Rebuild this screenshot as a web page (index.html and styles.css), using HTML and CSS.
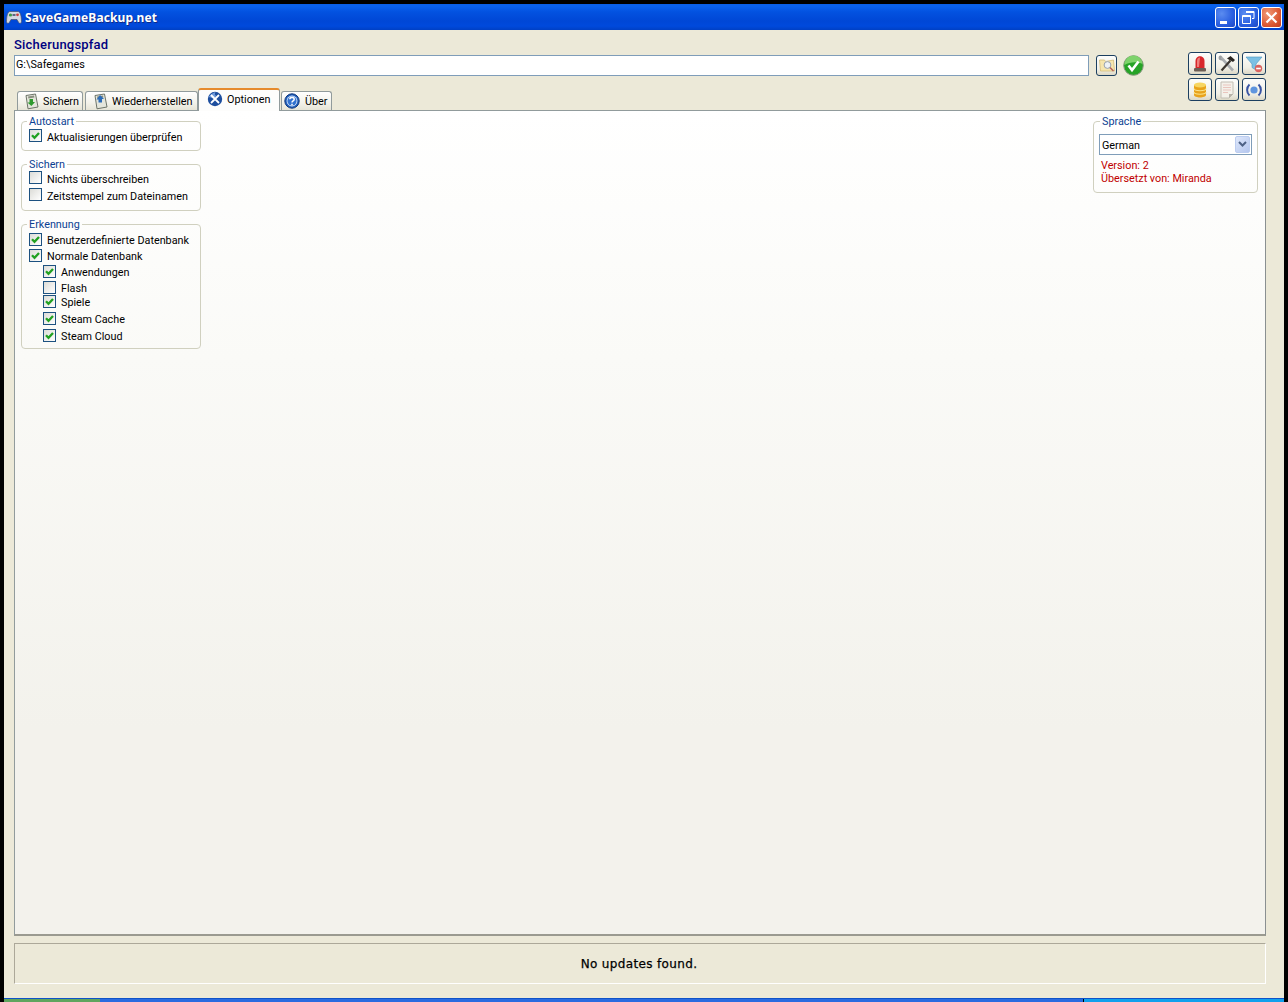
FILE: index.html
```html
<!DOCTYPE html>
<html lang="de">
<head>
<meta charset="utf-8">
<title>SaveGameBackup.net</title>
<link rel="stylesheet" href="styles.css">
</head>
<body>
<svg class="defs" width="0" height="0" aria-hidden="true">
  <defs>
    <symbol id="tick" viewBox="0 0 13 13">
      <path d="M3 6.300 5.500 8.900 10 4" fill="none" stroke="#21a121" stroke-width="2.300"/>
    </symbol>
    <symbol id="clip" viewBox="0 0 18 18">
      <path d="M4 3.500 13.500 2 16 15 6 16.800Z" fill="#e4e6dc" stroke="#6d7468" stroke-width="1"/>
      <path d="M6 4.500 12 3.500 12.400 5.600 6.400 6.600Z" fill="#8a8f80"/>
    </symbol>
  </defs>
</svg>
<div class="window">
  <header class="titlebar">
    <svg class="app-icon" width="16" height="16" viewBox="0 0 16 16">
      <path d="M4 2.500h8C14.500 2.500 15.500 8 15.500 12.500c0 2-2 2.500-3 .8L11 10.500H5L3.500 13.300C2.500 15 .5 14.500 .5 12.500 .5 8 1.500 2.500 4 2.500Z" fill="#d4d9e2" stroke="#46506a" stroke-width=".7"/>
      <circle cx="4.500" cy="6" r="1.600" fill="#3a9a44"/>
      <circle cx="11.500" cy="5.800" r="1.400" fill="#c84040"/>
      <rect x="6.500" y="5" width="3" height="2" fill="#5b6680"/>
    </svg>
    <span class="app-title">SaveGameBackup.net</span>
    <div class="win-controls">
      <button class="win-btn" type="button" aria-label="Minimieren">
        <svg width="21" height="21" viewBox="0 0 21 21"><rect x="5" y="14" width="7" height="3" fill="#fff"/></svg>
      </button>
      <button class="win-btn" type="button" aria-label="Wiederherstellen">
        <svg width="21" height="21" viewBox="0 0 21 21"><path d="M8 4.500h8v7h-2M4.500 8.500h8v8h-8Z M4.500 9.500h8 M8 5.500h8" fill="none" stroke="#fff" stroke-width="1"/></svg>
      </button>
      <button class="win-btn win-close" type="button" aria-label="Schließen">
        <svg width="21" height="21" viewBox="0 0 21 21"><path d="M5.500 5.500 15.500 15.500M15.500 5.500 5.500 15.500" stroke="#fff" stroke-width="2.200"/></svg>
      </button>
    </div>
  </header>

  <div class="client">
    <div class="head">
      <div class="path-block">
        <div class="path-label">Sicherungspfad</div>
        <div class="path-row">
          <div class="path-input">G:\Safegames</div>
          <button class="tool tool-small" type="button" aria-label="Ordner">
            <svg width="18" height="18" viewBox="0 0 18 18">
              <path d="M1.500 4h5l1 1.500 8-1.500 1 11H2.500Z" fill="#f6e6ae" stroke="#d4bd7a" stroke-width=".8"/>
              <circle cx="9.500" cy="9" r="3.400" fill="#eef2f5" stroke="#98a2ae"/>
              <path d="M12 11.500 15.500 15" stroke="#b5605a" stroke-width="1.500"/>
            </svg>
          </button>
          <svg class="ok-icon" width="21" height="21" viewBox="0 0 21 21">
            <circle cx="10.500" cy="10.500" r="9.800" fill="#26a326" stroke="#8d9a84" stroke-width="1"/>
            <path d="M1.500 10a9 9 0 0 1 18-1C15 6.500 7 6.500 1.500 10Z" fill="#7ed36b"/>
            <path d="M5.500 10.500 9 15 15.500 6.500" fill="none" stroke="#fff" stroke-width="2.600"/>
          </svg>
        </div>
      </div>

      <div class="tools">
        <button class="tool" type="button" aria-label="Alarm">
          <svg width="18" height="18" viewBox="0 0 18 18">
            <path d="M4.500 13V6C4.500 -.5 13.500 -.5 13.500 6V13Z" fill="#d8262b"/>
            <path d="M6 6C6 3.500 7.500 2.500 9 2.500L8 12H6Z" fill="#ee7f7c"/>
            <rect x="3" y="13" width="12" height="3.500" rx="1" fill="#6b5d55"/>
          </svg>
        </button>
        <button class="tool" type="button" aria-label="Werkzeuge">
          <svg width="18" height="18" viewBox="0 0 18 18">
            <path d="M3.500 3 15 15.500" stroke="#a9adb0" stroke-width="2.600"/>
            <path d="M12.500 5.500 3.500 15.500" stroke="#3a352f" stroke-width="2.200"/>
            <path d="M9 3.500 12.500 1l4.500 4-2 2Z" fill="#2a2622"/>
            <path d="M1 1.500 3 3.500 4.500 2 3 .5C1 .2.200 2 .8 4c.7 1.500 2.700 1.800 4 1" fill="#9a9ea1"/>
          </svg>
        </button>
        <button class="tool" type="button" aria-label="Filter">
          <svg width="18" height="18" viewBox="0 0 18 18">
            <path d="M1 2H17L11 9V15L7 12.500V9Z" fill="#7cc0e4" stroke="#4b94c0" stroke-width=".6"/>
            <circle cx="13.500" cy="13.500" r="3.700" fill="#d9635f"/>
            <rect x="11.200" y="12.700" width="4.600" height="1.600" fill="#fff"/>
          </svg>
        </button>
        <button class="tool" type="button" aria-label="Datenbank">
          <svg width="18" height="18" viewBox="0 0 18 18">
            <path d="M3 4v10c0 3.300 12 3.300 12 0V4Z" fill="#e8a31c"/>
            <ellipse cx="9" cy="4" rx="6" ry="2.500" fill="#f7d663"/>
            <path d="M3 7.500c0 3 12 3 12 0M3 11c0 3 12 3 12 0" fill="none" stroke="#fbe48a" stroke-width="1.100"/>
          </svg>
        </button>
        <button class="tool" type="button" aria-label="Protokoll">
          <svg width="18" height="18" viewBox="0 0 18 18">
            <path d="M3 1H15V13L11 17H3Z" fill="#f4f1ea" stroke="#c3beb4"/>
            <path d="M5 4h8M5 6.500h8M5 9h8M5 11.500h5" stroke="#e9c4bd"/>
            <path d="M11 17V13H15Z" fill="#b7b2a8"/>
          </svg>
        </button>
        <button class="tool" type="button" aria-label="Aktualisieren">
          <svg width="18" height="18" viewBox="0 0 18 18">
            <circle cx="9" cy="9" r="3.600" fill="#5f95de"/>
            <path d="M4.500 3.500a7.500 7.500 0 0 0 0 11M13.500 3.500a7.500 7.500 0 0 1 0 11" fill="none" stroke="#3a55a4" stroke-width="2"/>
          </svg>
        </button>
      </div>

      <nav class="tabs">
        <div class="tab">
          <svg class="tab-icon" width="18" height="18" viewBox="0 0 18 18">
            <use href="#clip"/>
            <path d="M7.500 7h3.500v3h2l-3.600 4-4-3.400h2.100Z" fill="#2e9a2e"/>
          </svg>
          <span>Sichern</span>
        </div>
        <div class="tab tab-wide">
          <svg class="tab-icon" width="18" height="18" viewBox="0 0 18 18">
            <use href="#clip"/>
            <path d="M9 3 13 7h-2v3.500H7.500V7.500H5.500Z" fill="#2c6cb8"/>
          </svg>
          <span>Wiederherstellen</span>
        </div>
        <div class="tab tab-active">
          <svg class="tab-icon" width="16" height="16" viewBox="0 0 16 16">
            <circle cx="8" cy="8" r="7.200" fill="#1d4e9e"/>
            <path d="M1.500 6C4 3 6 2 8.500 1c-1 2-1 3 1 4L6 7.500C4.500 6.500 3 6 1.500 6Z" fill="#6f9bdc"/>
            <path d="M4 4 12 12M12 4 4 12" stroke="#fff" stroke-width="1.800"/>
          </svg>
          <span>Optionen</span>
        </div>
        <div class="tab tab-narrow">
          <svg class="tab-icon" width="16" height="16" viewBox="0 0 16 16">
            <circle cx="8" cy="8" r="7.200" fill="#1f5fbd" stroke="#12387a" stroke-width="1"/>
            <circle cx="8" cy="8" r="5.400" fill="#dfeafa"/>
            <circle cx="8" cy="8" r="4.600" fill="#3272cf"/>
            <path d="M5.800 6.300C6 4 10.200 4 10.200 6.300 10.200 8 8 7.800 8 9.500M8 10.700V12.300" fill="none" stroke="#fff" stroke-width="1.500"/>
          </svg>
          <span>Über</span>
        </div>
      </nav>
    </div>

    <main class="panel">
      <div class="col-left">
        <fieldset class="group group-auto">
          <legend>Autostart</legend>
          <label class="check"><span class="box"><svg width="13" height="13"><use href="#tick"/></svg></span>Aktualisierungen überprüfen</label>
        </fieldset>
        <fieldset class="group group-save">
          <legend>Sichern</legend>
          <label class="check"><span class="box"></span>Nichts überschreiben</label>
          <label class="check gap-17"><span class="box"></span>Zeitstempel zum Dateinamen</label>
        </fieldset>
        <fieldset class="group group-detect">
          <legend>Erkennung</legend>
          <label class="check"><span class="box"><svg width="13" height="13"><use href="#tick"/></svg></span>Benutzerdefinierte Datenbank</label>
          <label class="check gap-16"><span class="box"><svg width="13" height="13"><use href="#tick"/></svg></span>Normale Datenbank</label>
          <label class="check sub gap-16"><span class="box"><svg width="13" height="13"><use href="#tick"/></svg></span>Anwendungen</label>
          <label class="check sub gap-16"><span class="box"></span>Flash</label>
          <label class="check sub gap-14"><span class="box"><svg width="13" height="13"><use href="#tick"/></svg></span>Spiele</label>
          <label class="check sub gap-17"><span class="box"><svg width="13" height="13"><use href="#tick"/></svg></span>Steam Cache</label>
          <label class="check sub gap-17"><span class="box"><svg width="13" height="13"><use href="#tick"/></svg></span>Steam Cloud</label>
        </fieldset>
      </div>
      <div class="col-right">
        <fieldset class="group group-lang">
          <legend>Sprache</legend>
          <div class="combo">
            <span class="combo-value">German</span>
            <span class="combo-btn">
              <svg width="9" height="7" viewBox="0 0 9 7"><path d="M1 1 4.500 4.500 8 1" fill="none" stroke="#4d6185" stroke-width="2"/></svg>
            </span>
          </div>
          <p class="lang-info">Version: 2</p>
          <p class="lang-info">Übersetzt von: Miranda</p>
        </fieldset>
      </div>
    </main>

    <footer class="status">No updates found.</footer>
  </div>

  <div class="taskbar">
    <div class="task-start"></div>
    <div class="task-mid"></div>
    <div class="task-tray"></div>
  </div>
</div>
</body>
</html>
```

FILE: styles.css
```css
* { box-sizing: border-box; }

html, body { margin: 0; height: 100%; }

body {
  background: #000;
  padding: 4px 4px 0;
  overflow: hidden;
  font-family: Roboto, "Noto Sans", sans-serif;
  font-size: 10.800px;
  color: #000;
}

.defs { display: block; height: 0; }

.window {
  display: flex;
  flex-direction: column;
  height: 998px;
}

/* title bar */
.titlebar {
  display: flex;
  align-items: center;
  flex: 0 0 26px;
  padding: 0 2px;
  background: linear-gradient(to bottom, #0a5ee6 0, #0a62ee 8%, #0352e0 30%, #0047d6 65%, #0049dc 85%, #0040c4 100%);
  color: #fff;
}

.app-icon { flex: none; margin-right: 3px; }

.app-title {
  font-family: "Noto Sans", sans-serif;
  font-size: 12px;
  font-weight: 700;
  letter-spacing: .1px;
  text-shadow: 1px 1px 0 #0f2a86;
}

.win-controls {
  display: flex;
  gap: 2px;
  margin-left: auto;
}

.win-btn {
  width: 21px;
  height: 21px;
  padding: 0;
  border: 1px solid #fff;
  border-radius: 3px;
  background: radial-gradient(circle at 30% 30%, #5b8cf0 0, #2a5fe0 60%, #1e48c4 100%);
  display: flex;
  align-items: center;
  justify-content: center;
}

.win-btn svg { margin: -1px; }

.win-close { background: radial-gradient(circle at 30% 30%, #f09a78 0, #dc5a34 60%, #c03a1c 100%); }

/* client */
.client {
  display: flex;
  flex-direction: column;
  flex: 1;
  min-height: 0;
  padding: 0 18px 14px 10px;
  background: #ece9d8;
}

.head {
  display: grid;
  grid-template-columns: 1fr 78px;
  grid-template-rows: 1fr 22px;
  flex: 0 0 80px;
  padding-top: 8px;
}

.path-label {
  height: 14px;
  margin-bottom: 2px;
  font-size: 13px;
  line-height: 14px;
  font-weight: 500;
  letter-spacing: .2px;
  color: #000080;
}

.path-row {
  display: flex;
  align-items: center;
  margin-right: 44px;
}

.path-input {
  flex: 1;
  height: 21px;
  padding: 0 1px;
  border: 1px solid #7f9db9;
  background: #fff;
  line-height: 17px;
}

.tool {
  display: flex;
  align-items: center;
  justify-content: center;
  width: 24px;
  height: 23px;
  padding: 0;
  border: 1px solid #1c3f60;
  border-radius: 3px;
  background: linear-gradient(to bottom, #fdfdfb, #f0efe6 70%, #dcd8c6);
}

.tool-small {
  width: 21px;
  height: 21px;
  margin-left: 7px;
}

.ok-icon { flex: none; margin: 1px 0 0 6px; }

.tools {
  grid-column: 2;
  grid-row: 1 / 3;
  display: grid;
  grid-template-columns: repeat(3, 24px);
  grid-auto-rows: 23px;
  gap: 3px;
  margin-top: 14px;
  align-content: start;
}

/* tabs */
.tabs {
  grid-column: 1;
  grid-row: 2;
  display: flex;
  align-items: flex-end;
  padding-left: 3px;
  gap: 2px;
}

.tab {
  display: flex;
  align-items: center;
  gap: 3px;
  width: 66px;
  height: 19px;
  padding: 0 0 0 4px;
  border: 1px solid #919b9c;
  border-bottom: 0;
  border-radius: 3px 3px 0 0;
  background: linear-gradient(to bottom, #fff, #f3f2ea 60%, #e6e4d6);
  white-space: nowrap;
}

.tab-wide { width: 113px; padding-left: 5px; }

.tab-active {
  position: relative;
  z-index: 1;
  width: 82px;
  height: 23px;
  margin: 0 -1px -1px -2px;
  padding-bottom: 3px;
  padding-left: 8px;
  gap: 4px;
  border-top: 2px solid #e68b2c;
  background: #fdfdfc;
}

.tab-narrow { width: 51px; gap: 5px; padding-left: 2px; }

.tab-icon { flex: none; }

/* panel */
.panel {
  display: flex;
  justify-content: space-between;
  flex: 0 0 826px;
  padding: 4px 7px 0 6px;
  border: 1px solid #919b9c;
  border-right-color: #8a9091;
  border-bottom: 2px solid #9a9a90;
  background: linear-gradient(to bottom, #fff 0, #fafaf7 30%, #f3f2ec 75%, #f3f2ec 100%);
}

.col-left { display: flex; flex-direction: column; width: 180px; }

.col-right { width: 165px; }

.group {
  margin: 0 0 7px;
  padding: 0 7px;
  min-width: 0;
  border: 1px solid #d0d0bf;
  border-radius: 4px;
}

.group legend {
  height: 13px;
  padding: 0 2px;
  margin-left: -2px;
  margin-bottom: -5px;
  line-height: 13px;
  color: #0b3f92;
}

.group-auto { height: 36px; padding-top: 6px; }
.group-save { height: 53px; padding-top: 5px; }
.group-detect { height: 131px; padding-top: 7px; margin-bottom: 0; }
.group-lang { height: 78px; padding: 11px 5px 0; }
.group-lang legend { margin-left: 1px; }

.check {
  display: flex;
  align-items: flex-start;
  gap: 5px;
  height: 14px;
  line-height: 17px;
  white-space: nowrap;
}

.group-detect .check { line-height: 15px; }

.gap-14 { margin-top: 0; }
.gap-16 { margin-top: 2px; }
.gap-17 { margin-top: 3px; }

.sub { padding-left: 14px; }

.box {
  display: block;
  flex: none;
  width: 13px;
  height: 13px;
  border: 1px solid #1c5180;
  background: linear-gradient(135deg, #dcdcd7, #fff);
}

.box svg { display: block; margin: -1px; }

/* language box */
.combo {
  display: flex;
  align-items: center;
  justify-content: space-between;
  height: 21px;
  padding: 0 1px 0 2px;
  border: 1px solid #7f9db9;
  background: #fff;
}

.combo-value { margin-top: 1px; }

.combo-btn {
  display: flex;
  align-items: center;
  justify-content: center;
  width: 15px;
  height: 17px;
  border: 1px solid #bccdf0;
  border-radius: 2px;
  background: linear-gradient(135deg, #dfe8fb, #b4c6ee);
}

.lang-info {
  margin: 0;
  padding-left: 2px;
  height: 13px;
  line-height: 13px;
  color: #c00000;
}

.combo + .lang-info { margin-top: 4px; }

/* status */
.status {
  flex: 0 0 41px;
  margin-top: 7px;
  padding-right: 2px;
  border: 1px solid #aca899;
  border-right-color: #fff;
  border-bottom-color: #fff;
  display: flex;
  align-items: center;
  justify-content: center;
  font-family: "DejaVu Sans", sans-serif;
  font-size: 12px;
  letter-spacing: .35px;
  -webkit-text-stroke: .25px #000;
}

/* desktop strip */
.taskbar {
  display: flex;
  flex: 0 0 4px;
  border-top: 1px solid #0f52c8;
}

.task-start { width: 96px; background: #5fa55f; }
.task-mid { flex: 1; background: #2a6be0; }
.task-tray { width: 200px; margin-left: 1px; background: #12a0ec; }
```
